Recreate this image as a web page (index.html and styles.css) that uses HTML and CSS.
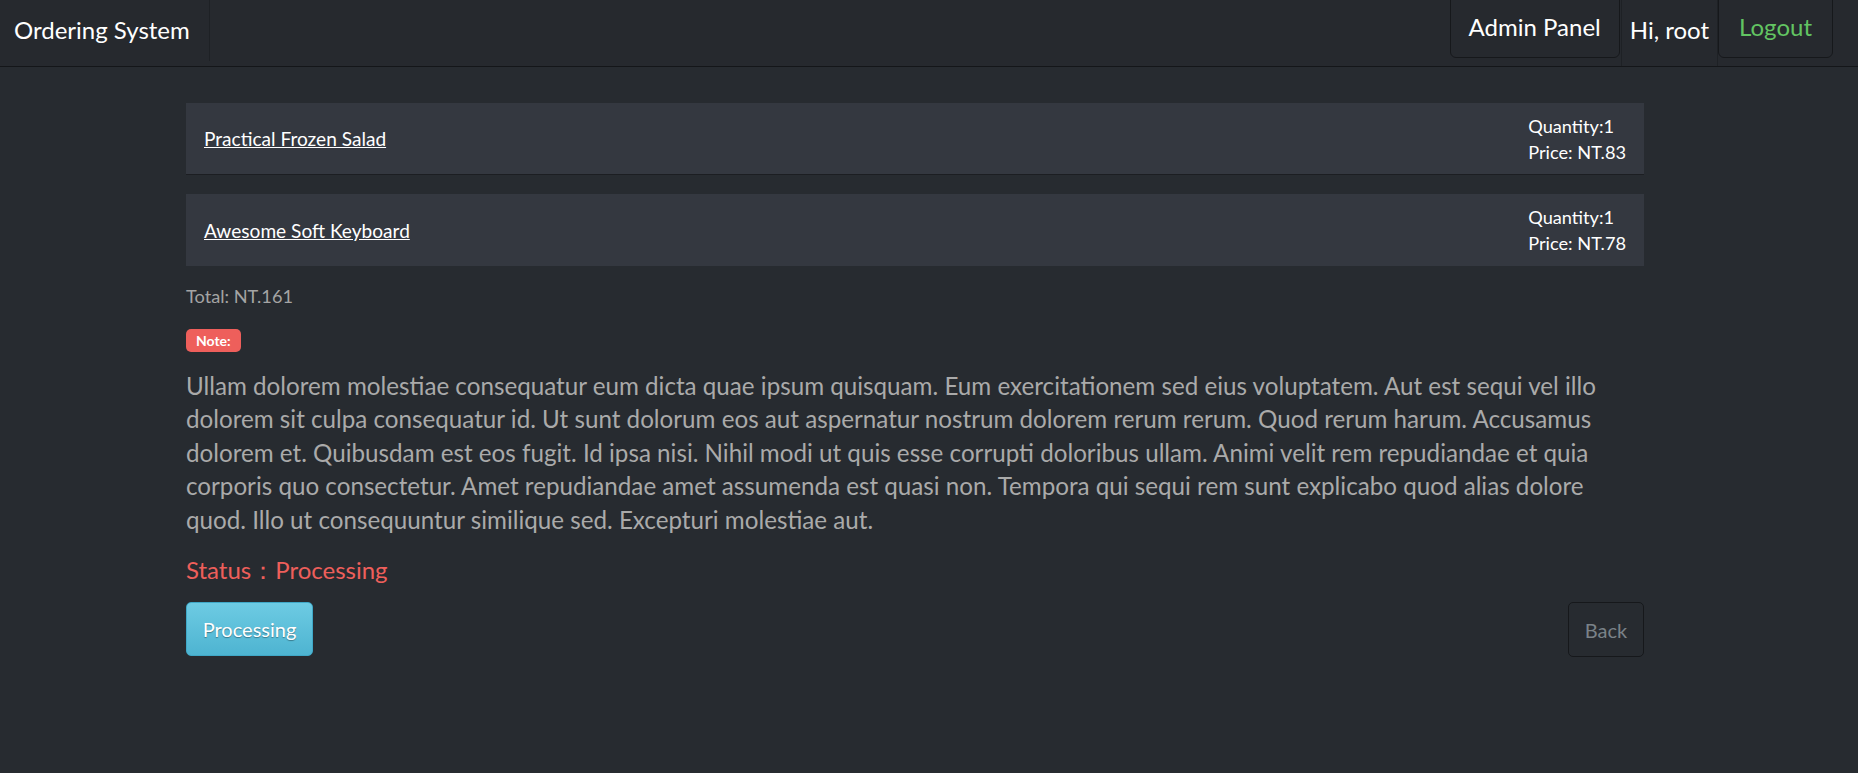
FILE: index.html
```html
<!DOCTYPE html>
<html lang="en">
<head>
<meta charset="utf-8">
<title>Ordering System</title>
<link rel="stylesheet" href="styles.css">
</head>
<body>
<nav class="navbar">
  <div class="brand">Ordering System</div>
  <div class="nav-right">
    <a class="nav-btn" href="#">Admin Panel</a>
    <span class="nav-text">Hi, root</span>
    <a class="nav-btn logout" href="#">Logout</a>
  </div>
</nav>
<main class="content">
  <div class="item first">
    <a class="item-name" href="#">Practical Frozen Salad</a>
    <div class="item-meta">
      <div>Quantity:1</div>
      <div>Price: NT.83</div>
    </div>
  </div>
  <div class="item">
    <a class="item-name" href="#">Awesome Soft Keyboard</a>
    <div class="item-meta">
      <div>Quantity:1</div>
      <div>Price: NT.78</div>
    </div>
  </div>
  <div class="total">Total: NT.161</div>
  <div class="note-row"><span class="badge">Note:</span></div>
  <p class="note">Ullam dolorem molestiae consequatur eum dicta quae ipsum quisquam. Eum exercitationem sed eius voluptatem. Aut est sequi vel illo dolorem sit culpa consequatur id. Ut sunt dolorum eos aut aspernatur nostrum dolorem rerum rerum. Quod rerum harum. Accusamus dolorem et. Quibusdam est eos fugit. Id ipsa nisi. Nihil modi ut quis esse corrupti doloribus ullam. Animi velit rem repudiandae et quia corporis quo consectetur. Amet repudiandae amet assumenda est quasi non. Tempora qui sequi rem sunt explicabo quod alias dolore quod. Illo ut consequuntur similique sed. Excepturi molestiae aut.</p>
  <div class="status">Status：Processing</div>
  <div class="actions">
    <button class="btn btn-info" type="button">Processing</button>
    <button class="btn btn-back" type="button">Back</button>
  </div>
</main>
</body>
</html>
```
FILE: styles.css
```css
* { box-sizing: border-box; }
html, body { margin: 0; padding: 0; }
body {
  background: #272b30;
  color: #aaaaaa;
  font-family: Lato, "Noto Sans", sans-serif;
  font-size: 20px;
  width: 1858px;
  height: 773px;
  overflow: hidden;
}
a { color: inherit; }

.navbar {
  display: flex;
  justify-content: space-between;
  height: 67px;
  border-bottom: 1px solid #141619;
  background: #26292e;
}
.brand {
  width: 210px;
  height: 61px;
  padding-left: 14px;
  border-right: 1px solid #1e2125;
  color: #ffffff;
  font-size: 24px;
  line-height: 60px;
}
.nav-right {
  display: flex;
  align-items: flex-start;
  margin-right: 25px;
}
.nav-btn {
  display: block;
  height: 59px;
  margin-top: -1px;
  padding: 0 18px;
  border: 1px solid #16181b;
  border-radius: 0 0 6px 6px;
  color: #ffffff;
  font-size: 24px;
  line-height: 54px;
  text-decoration: none;
}
.nav-btn.logout {
  padding: 0 20px;
  color: #62c462;
}
.nav-text {
  display: block;
  height: 66px;
  margin-left: 1px;
  padding: 0 8px;
  border-left: 1px solid #1e2125;
  border-right: 1px solid #1e2125;
  color: #ffffff;
  font-size: 24px;
  line-height: 60px;
}

.content {
  width: 1458px;
  margin: 36px 0 0 186px;
}
.item {
  display: flex;
  justify-content: space-between;
  align-items: center;
  height: 72px;
  padding: 0 18px;
  margin-bottom: 19px;
  background: #343840;
  color: #ffffff;
}
.item.first { border-bottom: 1px solid #1c1e22; }
.item + .item { margin-bottom: 15px; }
.item-name {
  color: #ffffff;
  font-size: 19.1px;
  text-decoration: underline;
}
.item-meta {
  font-size: 18.2px;
  line-height: 26px;
}
.total {
  font-size: 18.2px;
  line-height: 30px;
  color: #a4a4a4;
}
.note-row { margin-top: 15px; height: 23px; }
.badge {
  display: inline-block;
  height: 23px;
  padding: 0 10px;
  background: #ee5f5b;
  border-radius: 5px;
  color: #ffffff;
  font-size: 14px;
  font-weight: 700;
  line-height: 23px;
}
.note {
  margin: 20px 0 0;
  font-size: 24.2px;
  line-height: 33.4px;
  color: #aaaaaa;
}
.status {
  margin-top: 16px;
  color: #ee5f5b;
  font-size: 24px;
  line-height: 36px;
}
.actions {
  display: flex;
  justify-content: space-between;
  margin-top: 14px;
}
.btn {
  font-family: inherit;
  font-size: 20px;
  border-radius: 5px;
  cursor: pointer;
}
.btn-info {
  width: 127px;
  height: 54px;
  border: 1px solid #3fa8c7;
  background: linear-gradient(#6dcbe3, #4eb4d1);
  color: #ffffff;
  text-shadow: 0 1px 1px rgba(0,0,0,0.35);
}
.btn-back {
  width: 76px;
  height: 55px;
  border: 1px solid #16181b;
  background: #272b30;
  color: #7a8288;
}
```
